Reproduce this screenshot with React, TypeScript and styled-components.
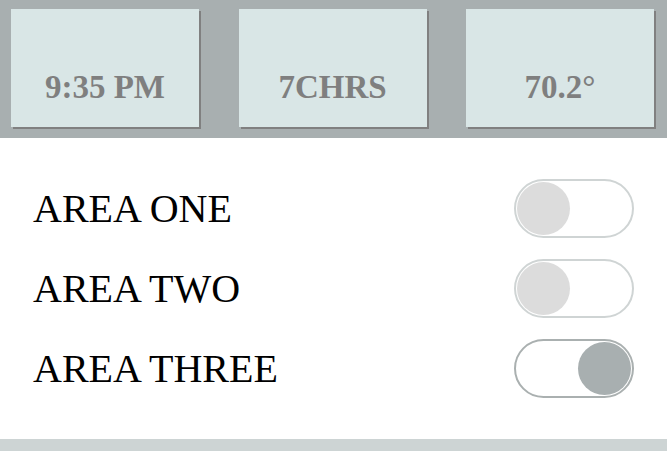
import * as React from "react"
import styled, { createGlobalStyle } from "styled-components"

const GlobalStyle = createGlobalStyle`
  html, body {
    margin: 0;
    padding: 0;
    background: #ffffff;
    font-family: "Liberation Serif", "Times New Roman", serif;
  }
`

const Page = styled.div`
  width: 667px;
  height: 451px;
  display: flex;
  flex-direction: column;
  overflow: hidden;
`

const StatusBar = styled.header`
  height: 138px;
  box-sizing: border-box;
  padding: 9px 13px 11px 11px;
  background: #a8afb0;
  display: flex;
  justify-content: space-between;
`

const StatusCard = styled.div`
  width: 188px;
  height: 118px;
  box-sizing: border-box;
  background: #d9e6e6;
  box-shadow: 2px 2px 0 #808080;
  display: flex;
  align-items: flex-end;
  justify-content: center;
  padding-bottom: 21px;
  color: #7f7f7f;
  font-weight: bold;
  font-size: 33px;
`

const AreaList = styled.main`
  flex: 1;
  padding: 30px 33px 30px 33px;
  display: flex;
  flex-direction: column;
`

const AreaRow = styled.div`
  height: 80px;
  display: flex;
  align-items: center;
  justify-content: space-between;
`

const AreaName = styled.span`
  font-size: 40px;
  color: #000000;
`

const Toggle = styled.button<{ $on: boolean }>`
  width: 120px;
  height: 59px;
  box-sizing: border-box;
  padding: 0 1px;
  border-radius: 30px;
  border: 2px solid ${p => (p.$on ? "#aab0b0" : "#cfd4d4")};
  background: #ffffff;
  display: flex;
  align-items: center;
  justify-content: ${p => (p.$on ? "flex-end" : "flex-start")};
  cursor: pointer;
`

const Knob = styled.span<{ $on: boolean }>`
  width: 53px;
  height: 53px;
  border-radius: 50%;
  background: ${p => (p.$on ? "#a8afb0" : "#dcdcdc")};
`

const Footer = styled.footer`
  height: 12px;
  background: #cdd4d4;
`

const stats = ["9:35 PM", "7CHRS", "70.2°"]

const initialAreas = [
  { name: "AREA ONE", on: false },
  { name: "AREA TWO", on: false },
  { name: "AREA THREE", on: true },
]

export default function App() {
  const [areas, setAreas] = React.useState(initialAreas)

  const flip = (i: number) =>
    setAreas(list => list.map((a, j) => (j === i ? { ...a, on: !a.on } : a)))

  return (
    <Page>
      <GlobalStyle />
      <StatusBar>
        {stats.map(s => (
          <StatusCard key={s}>{s}</StatusCard>
        ))}
      </StatusBar>
      <AreaList>
        {areas.map((a, i) => (
          <AreaRow key={a.name}>
            <AreaName>{a.name}</AreaName>
            <Toggle $on={a.on} onClick={() => flip(i)} aria-pressed={a.on}>
              <Knob $on={a.on} />
            </Toggle>
          </AreaRow>
        ))}
      </AreaList>
      <Footer />
    </Page>
  )
}
